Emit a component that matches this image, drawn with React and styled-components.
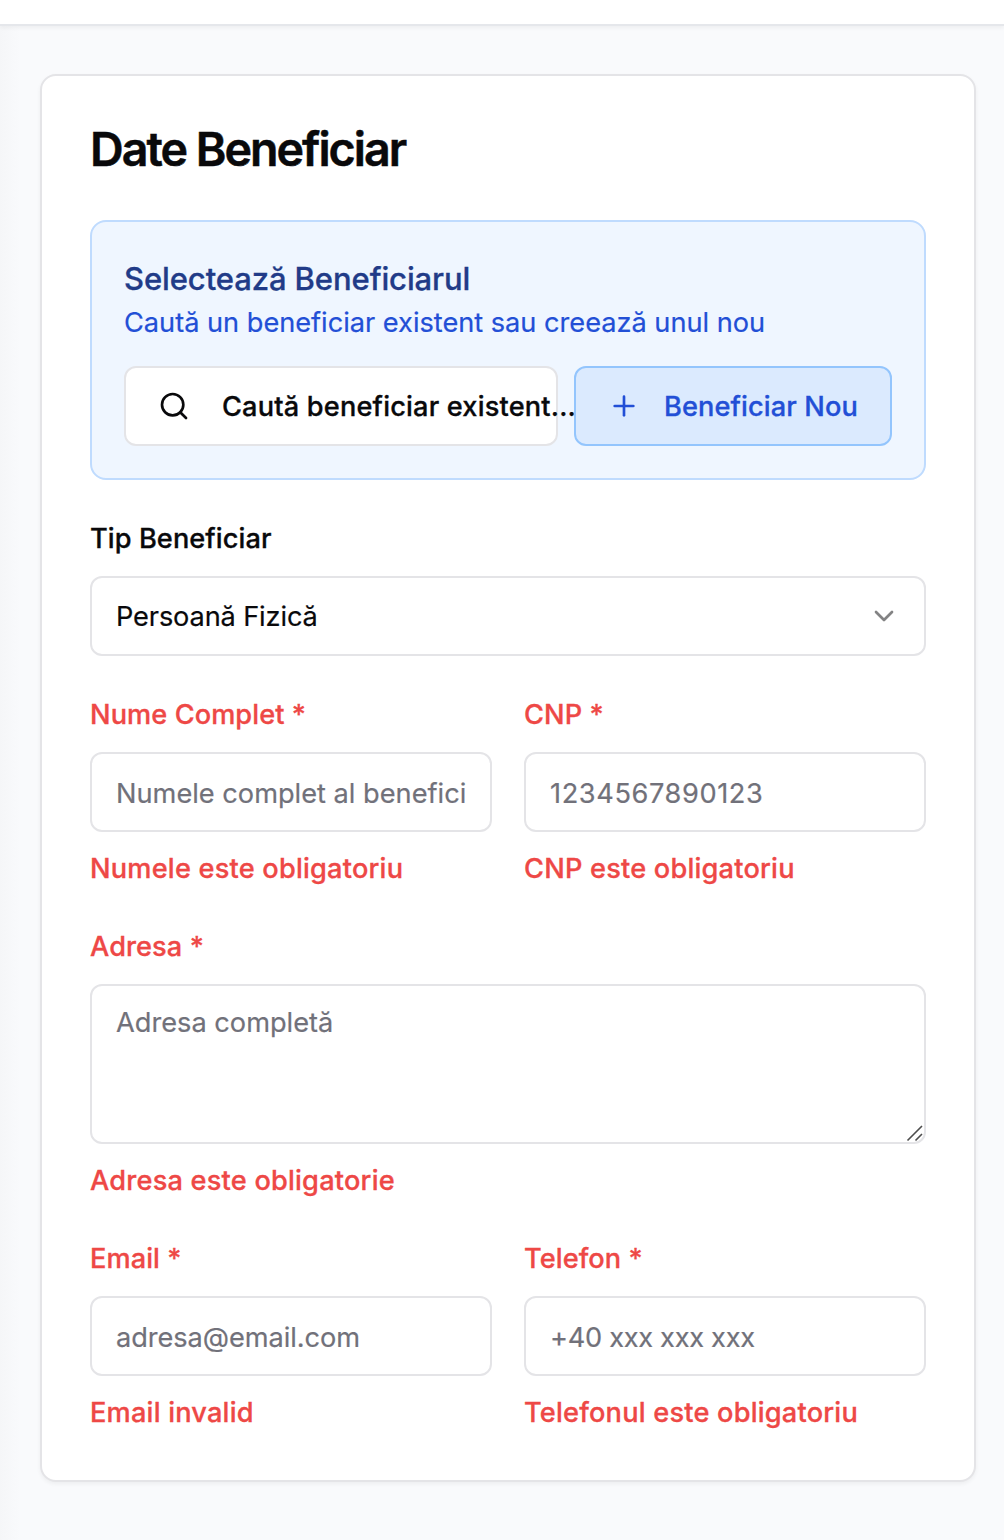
import React from "react";
import styled, { createGlobalStyle } from "styled-components";
import { Search, Plus, ChevronDown } from "lucide-react";

const GlobalStyle = createGlobalStyle`
  *, *::before, *::after { box-sizing: border-box; }
  body {
    margin: 0;
    background: #f9fafc;
    color: #09090b;
    font-family: Inter, "Liberation Sans", sans-serif;
    font-size: 27.2px;
    font-weight: 400;
    line-height: 40px;
    letter-spacing: 0;
    -webkit-text-stroke: 0.2px currentColor;
  }
  h2, h3, p { margin: 0; }
`;

const Page = styled.div`
  display: flex;
  flex-direction: column;
  min-height: 1540px;
  background: #f9fafc;
`;

const TopBar = styled.header`
  height: 26px;
  background: #fff;
  border-bottom: 2px solid #e5e7eb;
  box-shadow: 0 2px 4px rgba(0, 0, 0, 0.05);
  z-index: 1;
`;

const Main = styled.main`
  flex: 1;
  padding: 48px 28px 58px 40px;
  background: linear-gradient(to right, #f5f6f8, #f9fafc 20px);
`;

const Card = styled.section`
  display: flex;
  flex-direction: column;
  padding: 48px;
  background: #fff;
  border: 2px solid #e4e4e7;
  border-radius: 16px;
  box-shadow: 0 2px 4px rgba(0, 0, 0, 0.05);
`;

const Title = styled.h2`
  margin-bottom: 48px;
  font-size: 46.6px;
  font-weight: 600;
  line-height: 50px;
  height: 48px;
  letter-spacing: -2px;
  -webkit-text-stroke-width: 0.5px;
`;

const Panel = styled.div`
  padding: 32px;
  background: #eff6ff;
  border: 2px solid #bfdbfe;
  border-radius: 16px;
`;

const PanelTitle = styled.h3`
  height: 48px;
  color: #213b88;
  font-size: 31px;
  font-weight: 500;
  line-height: 50px;
  letter-spacing: -0.1px;
  -webkit-text-stroke-width: 0.3px;
`;

const PanelText = styled.p`
  height: 40px;
  color: #224fd6;
  line-height: 42px;
  letter-spacing: -0.02px;
`;

const Actions = styled.div`
  display: flex;
  gap: 16px;
  margin-top: 24px;
`;

const Button = styled.button`
  display: flex;
  align-items: center;
  flex: ${(p) => (p.$fill ? "1 1 0" : "0 0 318px")};
  min-width: 0;
  height: 80px;
  padding: 0 32px;
  gap: ${(p) => (p.$fill ? "32px" : "24px")};
  color: ${(p) => (p.$fill ? "#09090b" : "#224fd6")};
  background: ${(p) => (p.$fill ? "#fff" : "#dbeafe")};
  border: 2px solid ${(p) => (p.$fill ? "#e4e4e7" : "#93c5fd")};
  border-radius: 12px;
  font: inherit;
  font-weight: 500;
  letter-spacing: ${(p) => (p.$fill ? "0.17px" : "0.1px")};
  white-space: nowrap;
  position: relative;
  -webkit-text-stroke-width: 0.3px;

  svg { flex: none; }
  span { padding-top: 2px; }
`;

const Form = styled.form`
  display: flex;
  flex-direction: column;
  gap: 32px;
  margin-top: 32px;
`;

const Columns = styled.div`
  display: grid;
  grid-template-columns: 1fr 1fr;
  gap: 32px;
`;

const FieldBox = styled.div`
  display: flex;
  flex-direction: column;
  min-width: 0;
`;

const Label = styled.label`
  height: 48px;
  margin-bottom: 16px;
  color: ${(p) => (p.$invalid ? "#ee4846" : "#09090b")};
  font-weight: 500;
  line-height: 53px;
  letter-spacing: 0.07px;
  -webkit-text-stroke-width: 0.3px;
`;

const Control = styled.input`
  width: 100%;
  height: 80px;
  padding: 2px 24px 0;
  color: #09090b;
  background: #fff;
  border: 2px solid #e4e4e7;
  border-radius: 12px;
  font: inherit;
  letter-spacing: ${(p) => p.$tracking ?? "0"};
  outline: none;

  &::placeholder { color: #71717a; opacity: 1; }
`;

const AreaWrap = styled.div`
  position: relative;
  display: flex;
`;

const Area = styled(Control).attrs({ as: "textarea" })`
  height: 160px;
  padding: 17px 24px 15px;
  resize: none;
`;

const Grip = styled.svg`
  position: absolute;
  right: 1px;
  bottom: 1px;
`;

const SelectTrigger = styled.button`
  display: flex;
  align-items: center;
  justify-content: space-between;
  height: 80px;
  padding: 0 24px;
  color: #09090b;
  background: #fff;
  border: 2px solid #e4e4e7;
  border-radius: 12px;
  font: inherit;
  letter-spacing: -0.14px;

  svg { opacity: 0.5; }
  span { padding-top: 2px; }
`;

const ErrorText = styled.p`
  height: 40px;
  margin-top: 16px;
  color: #ee4846;
  font-weight: 500;
  line-height: 42px;
  letter-spacing: 0.2px;
  -webkit-text-stroke-width: 0.3px;
`;

function Field({ label, placeholder, error, multiline, tracking }) {
  return (
    <FieldBox>
      <Label $invalid>{label}</Label>
      {multiline ? (
        <AreaWrap>
          <Area placeholder={placeholder} />
          <Grip width="20" height="20" viewBox="0 0 20 20" fill="none" stroke="#4d4d4d" strokeWidth="1.6">
            <path d="M2.5 17.5 17 3M10.5 17.5 17 11" />
          </Grip>
        </AreaWrap>
      ) : (
        <Control placeholder={placeholder} $tracking={tracking} />
      )}
      <ErrorText>{error}</ErrorText>
    </FieldBox>
  );
}

export default function App() {
  return (
    <Page>
      <GlobalStyle />
      <TopBar />
      <Main>
        <Card>
          <Title>Date Beneficiar</Title>
          <Panel>
            <PanelTitle>Selectează Beneficiarul</PanelTitle>
            <PanelText>Caută un beneficiar existent sau creează unul nou</PanelText>
            <Actions>
              <Button type="button" $fill>
                <Search size={32} />
                <span>Caută beneficiar existent...</span>
              </Button>
              <Button type="button">
                <Plus size={32} />
                <span>Beneficiar Nou</span>
              </Button>
            </Actions>
          </Panel>
          <Form>
            <FieldBox>
              <Label>Tip Beneficiar</Label>
              <SelectTrigger type="button">
                <span>Persoană Fizică</span>
                <ChevronDown size={32} />
              </SelectTrigger>
            </FieldBox>
            <Columns>
              <Field label="Nume Complet *" placeholder="Numele complet al beneficiarului" error="Numele este obligatoriu" />
              <Field label="CNP *" placeholder="1234567890123" error="CNP este obligatoriu" tracking="0.6px" />
            </Columns>
            <Field label="Adresa *" placeholder="Adresa completă" error="Adresa este obligatorie" multiline />
            <Columns>
              <Field label="Email *" placeholder="adresa@email.com" error="Email invalid" tracking="-0.06px" />
              <Field label="Telefon *" placeholder="+40 xxx xxx xxx" error="Telefonul este obligatoriu" tracking="-0.3px" />
            </Columns>
          </Form>
        </Card>
      </Main>
    </Page>
  );
}
